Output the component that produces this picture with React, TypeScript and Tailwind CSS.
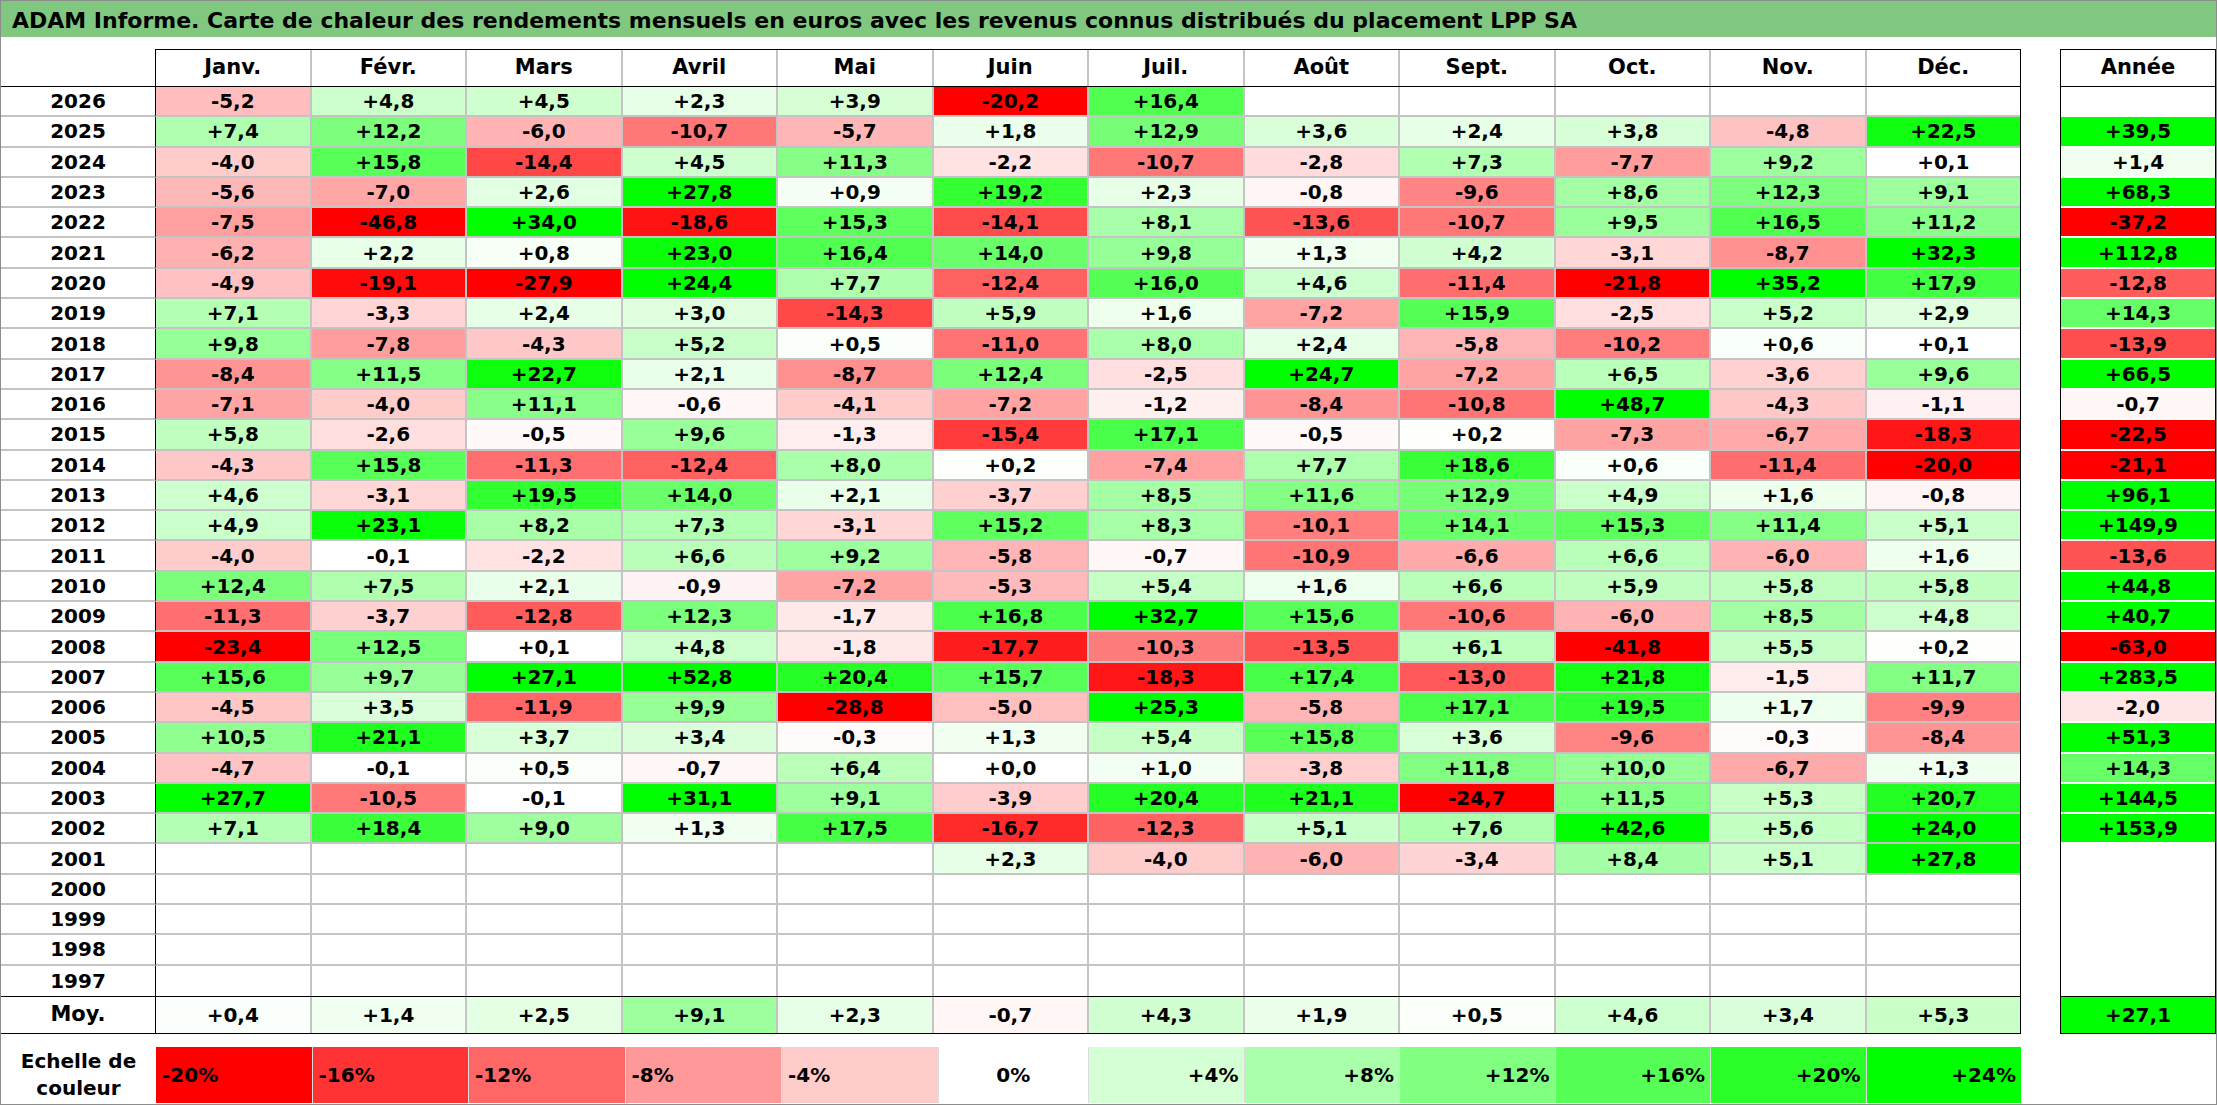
import React from 'react'

type Cell = string | null

interface YearRow {
  year: string
  months: Cell[]
  total: Cell
}

const MONTHS = ['Janv.', 'Févr.', 'Mars', 'Avril', 'Mai', 'Juin', 'Juil.', 'Août', 'Sept.', 'Oct.', 'Nov.', 'Déc.']

// '.' = empty cell
const row = (year: string, months: string, total: string): YearRow => ({
  year,
  months: months.split(' ').map((v) => (v === '.' ? null : v)),
  total: total === '.' ? null : total,
})

const ROWS: YearRow[] = [
  row('2026', '-5,2 +4,8 +4,5 +2,3 +3,9 -20,2 +16,4 . . . . .', '.'),
  row('2025', '+7,4 +12,2 -6,0 -10,7 -5,7 +1,8 +12,9 +3,6 +2,4 +3,8 -4,8 +22,5', '+39,5'),
  row('2024', '-4,0 +15,8 -14,4 +4,5 +11,3 -2,2 -10,7 -2,8 +7,3 -7,7 +9,2 +0,1', '+1,4'),
  row('2023', '-5,6 -7,0 +2,6 +27,8 +0,9 +19,2 +2,3 -0,8 -9,6 +8,6 +12,3 +9,1', '+68,3'),
  row('2022', '-7,5 -46,8 +34,0 -18,6 +15,3 -14,1 +8,1 -13,6 -10,7 +9,5 +16,5 +11,2', '-37,2'),
  row('2021', '-6,2 +2,2 +0,8 +23,0 +16,4 +14,0 +9,8 +1,3 +4,2 -3,1 -8,7 +32,3', '+112,8'),
  row('2020', '-4,9 -19,1 -27,9 +24,4 +7,7 -12,4 +16,0 +4,6 -11,4 -21,8 +35,2 +17,9', '-12,8'),
  row('2019', '+7,1 -3,3 +2,4 +3,0 -14,3 +5,9 +1,6 -7,2 +15,9 -2,5 +5,2 +2,9', '+14,3'),
  row('2018', '+9,8 -7,8 -4,3 +5,2 +0,5 -11,0 +8,0 +2,4 -5,8 -10,2 +0,6 +0,1', '-13,9'),
  row('2017', '-8,4 +11,5 +22,7 +2,1 -8,7 +12,4 -2,5 +24,7 -7,2 +6,5 -3,6 +9,6', '+66,5'),
  row('2016', '-7,1 -4,0 +11,1 -0,6 -4,1 -7,2 -1,2 -8,4 -10,8 +48,7 -4,3 -1,1', '-0,7'),
  row('2015', '+5,8 -2,6 -0,5 +9,6 -1,3 -15,4 +17,1 -0,5 +0,2 -7,3 -6,7 -18,3', '-22,5'),
  row('2014', '-4,3 +15,8 -11,3 -12,4 +8,0 +0,2 -7,4 +7,7 +18,6 +0,6 -11,4 -20,0', '-21,1'),
  row('2013', '+4,6 -3,1 +19,5 +14,0 +2,1 -3,7 +8,5 +11,6 +12,9 +4,9 +1,6 -0,8', '+96,1'),
  row('2012', '+4,9 +23,1 +8,2 +7,3 -3,1 +15,2 +8,3 -10,1 +14,1 +15,3 +11,4 +5,1', '+149,9'),
  row('2011', '-4,0 -0,1 -2,2 +6,6 +9,2 -5,8 -0,7 -10,9 -6,6 +6,6 -6,0 +1,6', '-13,6'),
  row('2010', '+12,4 +7,5 +2,1 -0,9 -7,2 -5,3 +5,4 +1,6 +6,6 +5,9 +5,8 +5,8', '+44,8'),
  row('2009', '-11,3 -3,7 -12,8 +12,3 -1,7 +16,8 +32,7 +15,6 -10,6 -6,0 +8,5 +4,8', '+40,7'),
  row('2008', '-23,4 +12,5 +0,1 +4,8 -1,8 -17,7 -10,3 -13,5 +6,1 -41,8 +5,5 +0,2', '-63,0'),
  row('2007', '+15,6 +9,7 +27,1 +52,8 +20,4 +15,7 -18,3 +17,4 -13,0 +21,8 -1,5 +11,7', '+283,5'),
  row('2006', '-4,5 +3,5 -11,9 +9,9 -28,8 -5,0 +25,3 -5,8 +17,1 +19,5 +1,7 -9,9', '-2,0'),
  row('2005', '+10,5 +21,1 +3,7 +3,4 -0,3 +1,3 +5,4 +15,8 +3,6 -9,6 -0,3 -8,4', '+51,3'),
  row('2004', '-4,7 -0,1 +0,5 -0,7 +6,4 +0,0 +1,0 -3,8 +11,8 +10,0 -6,7 +1,3', '+14,3'),
  row('2003', '+27,7 -10,5 -0,1 +31,1 +9,1 -3,9 +20,4 +21,1 -24,7 +11,5 +5,3 +20,7', '+144,5'),
  row('2002', '+7,1 +18,4 +9,0 +1,3 +17,5 -16,7 -12,3 +5,1 +7,6 +42,6 +5,6 +24,0', '+153,9'),
  row('2001', '. . . . . +2,3 -4,0 -6,0 -3,4 +8,4 +5,1 +27,8', '.'),
  row('2000', '. . . . . . . . . . . .', '.'),
  row('1999', '. . . . . . . . . . . .', '.'),
  row('1998', '. . . . . . . . . . . .', '.'),
  row('1997', '. . . . . . . . . . . .', '.'),
]

const AVERAGES = '+0,4 +1,4 +2,5 +9,1 +2,3 -0,7 +4,3 +1,9 +0,5 +4,6 +3,4 +5,3'.split(' ')
const AVERAGE_TOTAL = '+27,1'

const SCALE = [-20, -16, -12, -8, -4, 0, 4, 8, 12, 16, 20, 24]

// red at -20 and below, white at 0, green at +24 and above
function heat(v: Cell | number): string {
  if (v === null) return '#ffffff'
  const n = typeof v === 'number' ? v : parseFloat(v.replace(',', '.'))
  if (n < 0) {
    const c = Math.round(255 * (1 - Math.min(1, -n / 20)))
    return `rgb(255,${c},${c})`
  }
  const c = Math.round(255 * (1 - Math.min(1, n / 24)))
  return `rgb(${c},255,${c})`
}

export default function App() {
  return (
    <div className="w-[2217px] h-[1105px] overflow-hidden border border-[#8c8c8c] bg-white font-bold text-black font-['DejaVu_Sans',sans-serif]">
      <div className="flex h-[36px] items-center whitespace-nowrap bg-[#80c880] pl-[11px] pt-[3px] text-[22px]">
        ADAM Informe. Carte de chaleur des rendements mensuels en euros avec les revenus connus distribués du placement LPP SA
      </div>

      <div className="mt-[12px] flex">
        {/* months table */}
        <div className="w-[2020px]">
          <div className="flex h-[38px] border-b border-black">
            <div className="w-[154px]" />
            <div className="flex flex-1 border-x border-t border-black">
              {MONTHS.map((m) => (
                <div
                  key={m}
                  className="flex flex-1 items-center justify-center border-r-2 border-[#c4c4c4] text-[21px] last:border-r-0"
                >
                  {m}
                </div>
              ))}
            </div>
          </div>

          {ROWS.map((r, i) => {
            const last = i === ROWS.length - 1
            return (
              <div key={r.year} className="flex h-[30.3px] border-r border-black">
                <div
                  className={`flex w-[155px] items-center justify-center border-r border-r-black text-[20px] ${
                    last ? '' : 'border-b-2 border-b-[#c4c4c4]'
                  }`}
                >
                  {r.year}
                </div>
                {r.months.map((v, j) => (
                  <div
                    key={j}
                    className={`flex flex-1 items-center justify-center border-r-2 border-[#c4c4c4] text-[20px] last:border-r-0 ${
                      last ? '' : 'border-b-2'
                    }`}
                    style={{ backgroundColor: heat(v) }}
                  >
                    {v}
                  </div>
                ))}
              </div>
            )
          })}

          <div className="flex h-[38px] border-y border-r border-black">
            <div className="flex w-[155px] items-center justify-center border-r border-black text-[21px]">Moy.</div>
            {AVERAGES.map((v, j) => (
              <div
                key={j}
                className="flex flex-1 items-center justify-center border-r-2 border-[#c4c4c4] text-[20px] last:border-r-0"
                style={{ backgroundColor: heat(v) }}
              >
                {v}
              </div>
            ))}
          </div>
        </div>

        {/* yearly totals */}
        <div className="ml-[39px] flex w-[156px] flex-col">
          <div className="flex h-[38px] items-center justify-center border border-black text-[21px]">Année</div>
          <div className="border-x border-black">
            {ROWS.map((r, i) => (
              <div
                key={r.year}
                className={`flex h-[30.3px] items-center justify-center text-[20px] ${
                  i === ROWS.length - 1 ? '' : 'border-b-2 border-white'
                }`}
                style={{ backgroundColor: heat(r.total) }}
              >
                {r.total}
              </div>
            ))}
          </div>
          <div
            className="flex h-[38px] items-center justify-center border border-black text-[20px]"
            style={{ backgroundColor: heat(AVERAGE_TOTAL) }}
          >
            {AVERAGE_TOTAL}
          </div>
        </div>
      </div>

      {/* colour scale */}
      <div className="mt-[13px] flex h-[56px] w-[2020px]">
        <div className="flex w-[155px] flex-col items-center justify-center text-[20px] leading-[27px]">
          <span>Echelle de</span>
          <span>couleur</span>
        </div>
        {SCALE.map((s) => (
          <div
            key={s}
            className={`flex flex-1 items-center border-r border-[#dcdcdc] text-[20px] last:border-r-0 ${
              s < 0 ? 'justify-start pl-[6px]' : s === 0 ? 'justify-center' : 'justify-end pr-[5px]'
            }`}
            style={{ backgroundColor: heat(s) }}
          >
            {s > 0 ? `+${s}%` : `${s}%`}
          </div>
        ))}
      </div>
    </div>
  )
}
